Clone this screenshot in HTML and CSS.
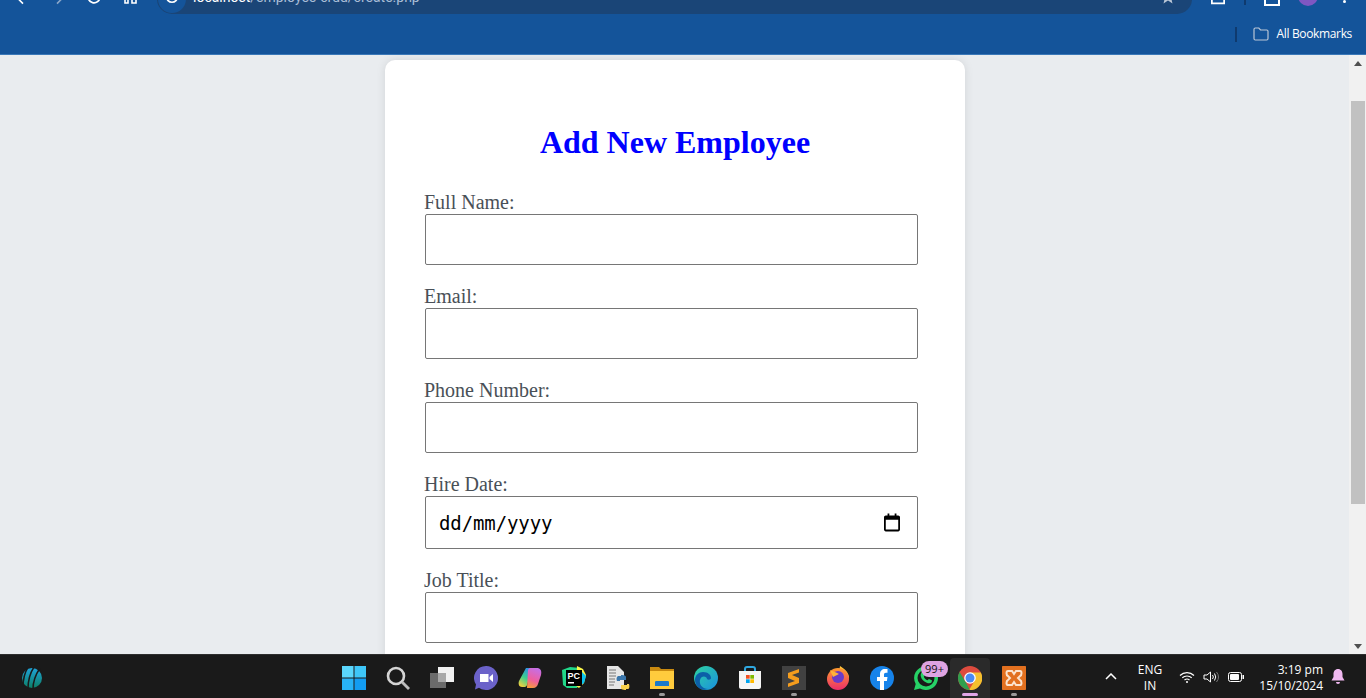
FILE: index.html
```html
<!DOCTYPE html>
<html lang="en">
<head>
<meta charset="utf-8">
<title>Add New Employee</title>
<link rel="stylesheet" href="styles.css">
</head>
<body>
<header class="chrome">
  <div class="toolbar">
    <svg class="tb tb-back" viewBox="0 0 20 20"><path d="M16 10H4M10 3l-7 7 7 7" fill="none" stroke="#fff" stroke-width="2"/></svg>
    <svg class="tb tb-fwd" viewBox="0 0 20 20"><path d="M4 10h12M10 3l7 7-7 7" fill="none" stroke="#8aa6c8" stroke-width="2"/></svg>
    <svg class="tb tb-reload" viewBox="0 0 20 20"><path d="M16.500 10a6.500 6.500 0 1 1-2-4.700" fill="none" stroke="#fff" stroke-width="2"/></svg>
    <svg class="tb tb-home" viewBox="0 0 13 4"><path d="M1 -3h3v6H1zM8 -3h4v6H8z" fill="none" stroke="#fff" stroke-width="1.600"/></svg>
    <div class="omnibox">
      <span class="lens"><svg class="lens-icon" viewBox="0 0 20 20"><circle cx="10" cy="7" r="7" fill="none" stroke="#fff" stroke-width="2"/></svg></span>
      <span class="url"><b class="host">localhost</b>/employee-crud/create.php</span>
      <svg class="star" viewBox="0 0 20 20"><path d="M10 1l2.600 6H19l-5 4.300 1.600 6.700L10 14.500 4.400 18 6 11.300 1 7h6.400z" fill="#b9c6d6"/></svg>
    </div>
    <svg class="tb tb-tabs" viewBox="0 0 16 20"><path d="M1 1h14v13H1z" fill="none" stroke="#fff" stroke-width="2"/></svg>
    <span class="tb-sep"></span>
    <svg class="tb tb-dl" viewBox="0 0 16 20"><path d="M1 1h14v14H1zM8 1v9" fill="none" stroke="#fff" stroke-width="2"/></svg>
    <span class="avatar"></span>
    <span class="dots"></span>
  </div>
  <div class="bookmarks">
    <span class="bm-sep"></span>
    <svg class="folder" viewBox="0 0 16 14"><path d="M1 2.500c0-.8.500-1.500 1.300-1.500h3.500l1.700 2h6.200c.8 0 1.300.6 1.300 1.300v7.200c0 .8-.5 1.500-1.300 1.500H2.300C1.500 13 1 12.300 1 11.500z" fill="none" stroke="#b9c6d6" stroke-width="1.200"/></svg>
    <span class="bm-text">All Bookmarks</span>
  </div>
</header>

<main class="viewport">
  <div class="page">
    <section class="card">
      <h2 class="title">Add New Employee</h2>
      <form class="form">
        <div class="field">
          <label class="label" for="name">Full Name:</label>
          <input class="input" id="name" type="text">
        </div>
        <div class="field">
          <label class="label" for="email">Email:</label>
          <input class="input" id="email" type="text">
        </div>
        <div class="field">
          <label class="label" for="phone">Phone Number:</label>
          <input class="input" id="phone" type="text">
        </div>
        <div class="field">
          <label class="label">Hire Date:</label>
          <div class="date">
            <span class="date-text">dd/mm/yyyy</span>
            <svg class="cal" viewBox="0 0 18 20"><path d="M4 0h2v2h6V0h2v2h2c1 0 2 .9 2 2v14c0 1.100-1 2-2 2H2c-1 0-2-.9-2-2V4c0-1.100 1-2 2-2h2zM2 7v11h14V7z" fill="#000"/></svg>
          </div>
        </div>
        <div class="field">
          <label class="label" for="job">Job Title:</label>
          <input class="input" id="job" type="text">
        </div>
      </form>
    </section>
  </div>
  <aside class="scrollbar">
    <span class="arrow-up"></span>
    <span class="thumb"></span>
    <span class="arrow-down"></span>
  </aside>
</main>

<footer class="taskbar">
  <div class="tb-left">
    <svg class="ic-logo" viewBox="0 0 22 22">
      <defs><linearGradient id="icc" x1="0" y1="0" x2="0" y2="1"><stop offset="0" stop-color="#1fa3d8"/><stop offset="1" stop-color="#0d7f66"/></linearGradient></defs>
      <circle cx="11" cy="11" r="10" fill="url(#icc)"/>
      <path d="M7 0C4 5 2 12 2 20M13 0C9 6 7 14 7 22M19 1C15 7 12 15 12 22" stroke="#1a1a1a" stroke-width="1.500" fill="none"/>
    </svg>
  </div>
  <div class="apps">
    <span class="app"><svg class="ic" viewBox="0 0 24 24"><path fill="#5ad6fc" d="M0 0h11.500v11.500H0z"/><path fill="#3ec6f8" d="M12.500 0H24v11.500H12.500z"/><path fill="#28b2f6" d="M0 12.500h11.500V24H0z"/><path fill="#129cf2" d="M12.500 12.500H24V24H12.500z"/></svg></span>
    <span class="app"><svg class="ic" viewBox="0 0 24 24"><circle cx="10" cy="10" r="8" fill="none" stroke="#d4d4d4" stroke-width="2.600"/><path d="M16 16l7 7" stroke="#bdbdbd" stroke-width="2.800"/></svg></span>
    <span class="app"><svg class="ic" viewBox="0 0 24 24"><path fill="#6b6b6b" d="M0 7h16v15H0z"/><path fill="#f1f1f1" d="M8 1h16v15H8z"/><path fill="#a8a8a8" d="M8 7h8v9H8z"/></svg></span>
    <span class="app"><svg class="ic" viewBox="0 0 24 24"><path fill="#6b62c9" d="M12 0a12 12 0 1 1-7 21.700L1 23.500l1-5A12 12 0 0 1 12 0z"/><path fill="#fff" d="M6 8h8.500v8H6zM15.500 11l3.500-3v8l-3.500-3z"/></svg></span>
    <span class="app"><svg class="ic" viewBox="0 0 24 24">
      <defs>
        <linearGradient id="cpl" x1="0.700" y1="0" x2="0.200" y2="1"><stop offset="0" stop-color="#2c8fe8"/><stop offset="0.500" stop-color="#3ccf8e"/><stop offset="1" stop-color="#f7d13c"/></linearGradient>
        <linearGradient id="cpr" x1="0.600" y1="0" x2="0.300" y2="1"><stop offset="0" stop-color="#c56fe6"/><stop offset="0.600" stop-color="#ef5f9e"/><stop offset="1" stop-color="#f79a3c"/></linearGradient>
      </defs>
      <path fill="url(#cpl)" d="M8 2h6l-5 17c-.5 1.500-1.500 2-3 2H4c-3 0-4-3-3-6z"/>
      <path fill="url(#cpr)" d="M10 4c.5-1.500 1.500-2 3-2h6c3 0 5 2 4 7l-3 9c-.7 2-2 4-5 4H9z"/>
    </svg></span>
    <span class="app"><svg class="ic" viewBox="0 0 24 24">
      <path fill="#21d789" d="M0 4l8-3 10 1 2 5-1 7-4 8H5L1 19z"/>
      <path fill="#fcf84a" d="M15 0l6 3 3 6-2 8-5 5-3-2z"/>
      <path fill="#07c3f2" d="M19 5l5 5-2 7-3 2z"/>
      <path fill="#000" d="M4 4h16v16H4z"/>
      <path fill="#fff" d="M6 16h6v1.500H6z"/>
      <text class="pc" x="5.500" y="12.500">PC</text>
    </svg></span>
    <span class="app"><svg class="ic" viewBox="0 0 24 24">
      <path fill="#e6e6e6" d="M1 0h11l6 6v17H1z"/>
      <path d="M3 4h7M3 7h7M3 10h7M3 13h6M3 16h6M3 19h5" stroke="#777" stroke-width="1"/>
      <path fill="#3a76ab" d="M15 9c4 0 5 1 5 2v3h-6v1h-3c-1-3 0-5 2-5h2z"/>
      <path fill="#f7d04b" d="M20 24c-4 0-5-1-5-2v-3h6v-1h2c1 3 0 5-1 5h-2z"/>
    </svg></span>
    <span class="app app-run"><svg class="ic" viewBox="0 0 24 24">
      <path fill="#c98a10" d="M0 1h9l2 2h13v6H0z"/>
      <path fill="#ffcb3d" d="M0 5h24v18H0z"/>
      <path fill="#1b79c9" d="M6 15h12c1 0 1 1 1 2v3H5v-3c0-1 0-2 1-2z"/>
    </svg></span>
    <span class="app"><svg class="ic" viewBox="0 0 24 24">
      <defs><linearGradient id="edge" x1="0" y1="0" x2="1" y2="1"><stop offset="0" stop-color="#2ed3a0"/><stop offset="1" stop-color="#1a8fe0"/></linearGradient></defs>
      <circle cx="12" cy="12" r="12" fill="url(#edge)"/>
      <path fill="#0c5fa8" d="M1 14c0-5 4-8 8-8 5 0 8 3 8 6 0 2-3 2-4 1 0-3-6-4-7 1-1 4 2 9 8 9-7 3-13-3-13-9z"/>
    </svg></span>
    <span class="app"><svg class="ic" viewBox="0 0 24 24">
      <path d="M7 7V3c0-1 1-2 2-2h6c1 0 2 1 2 2v4" fill="none" stroke="#2fa8e0" stroke-width="2"/>
      <path fill="#f5f5f5" d="M1 5h22v16c0 1-1 2-2 2H3c-1 0-2-1-2-2z"/>
      <path fill="#f25022" d="M8 9h3.700v3.700H8z"/>
      <path fill="#7fba00" d="M12.300 9H16v3.700h-3.700z"/>
      <path fill="#00a4ef" d="M8 13.300h3.700V17H8z"/>
      <path fill="#ffb900" d="M12.300 13.300H16V17h-3.700z"/>
    </svg></span>
    <span class="app app-run"><svg class="ic" viewBox="0 0 24 24">
      <path fill="#414141" d="M0 0h24v24H0z"/>
      <path fill="#f59d1d" d="M17 3L6 7v5l7 3-7 2.500V21l11-4v-5l-7-3 7-2.500z"/>
    </svg></span>
    <span class="app"><svg class="ic" viewBox="0 0 24 24">
      <defs><linearGradient id="ff" x1="0" y1="0" x2="0" y2="1"><stop offset="0" stop-color="#ff9b2e"/><stop offset="1" stop-color="#ec2d6b"/></linearGradient></defs>
      <path fill="#ffc53a" d="M14 0c5 3 9 7 9 12H12z"/>
      <circle cx="12" cy="13" r="11" fill="url(#ff)"/>
      <circle cx="12" cy="11" r="6" fill="#6a3bc9"/>
      <path fill="#ffb43a" d="M4 4c2 1 6 2 9 4l-6 3z"/>
    </svg></span>
    <span class="app"><svg class="ic" viewBox="0 0 24 24">
      <circle cx="12" cy="12" r="12" fill="#1683ea"/>
      <path fill="#fff" d="M10 24v-9H7v-4h3V8c0-3 2-5 5-5h2.500v3.700H16c-1.500 0-2 .8-2 2V11h3.500l-.6 4H14v9z"/>
    </svg></span>
    <span class="app"><svg class="ic" viewBox="0 0 24 24">
      <path fill="#26d266" d="M12 0a12 12 0 1 1-6 22.400L0 24l1.700-6A12 12 0 0 1 12 0z"/>
      <circle cx="12" cy="12" r="8.500" fill="#1a1a1a"/>
      <path fill="#26d266" d="M8 6l2 .2 1 3-1.200 1.500c.8 1.700 2 2.800 3.700 3.500l1.400-1.300 3 1.300-.2 2c-1 1.300-3 1.500-5 .6-3.300-1.400-5.400-3.800-6-6.800C6.500 8 7 7 8 6z"/>
    </svg><span class="badge">99+</span></span>
    <span class="app app-active"><svg class="ic" viewBox="0 0 24 24">
      <circle cx="12" cy="12" r="12" fill="#dd4b3e"/>
      <path fill="#f5c02e" d="M12 6.500h10.800A12 12 0 0 1 11 24l5.500-9z"/>
      <path fill="#2fa04e" d="M1.600 6l6 10 4.300 8A12 12 0 0 1 1.600 6z"/>
      <circle cx="12" cy="12" r="5.800" fill="#fff"/>
      <circle cx="12" cy="12" r="4.500" fill="#4a8af4"/>
    </svg></span>
    <span class="app app-run"><svg class="ic" viewBox="0 0 24 24">
      <path fill="#e2701f" d="M1 0h22c.6 0 1 .4 1 1v22c0 .6-.4 1-1 1H1c-.6 0-1-.4-1-1V1c0-.6.400-1 1-1z"/>
      <path d="M6 5h4l2 3 2-3h4c2 0 2 4 0 5l-2 2 2 2c2 1 2 5 0 5h-4l-2-3-2 3H6c-2 0-2-4 0-5l2-2-2-2c-2-1-2-5 0-5z" fill="none" stroke="#fbe3cd" stroke-width="2"/>
    </svg></span>
  </div>
  <div class="tray">
    <svg class="chev" viewBox="0 0 12 7"><path d="M1 6l5-5 5 5" fill="none" stroke="#fff" stroke-width="1.500"/></svg>
    <span class="lang">ENG<br>IN</span>
    <svg class="wifi" viewBox="0 0 16 12"><path d="M1 4.500a10 10 0 0 1 14 0M3.300 6.800a7 7 0 0 1 9.400 0M5.500 9a4 4 0 0 1 5 0" fill="none" stroke="#fff" stroke-width="1.200"/><circle cx="8" cy="11" r="1" fill="#fff"/></svg>
    <svg class="vol" viewBox="0 0 16 12"><path d="M1 4h3l3.500-3v10L4 8H1z" fill="none" stroke="#fff" stroke-width="1"/><path d="M9.500 4a3 3 0 0 1 0 4M11.500 2.500a6 6 0 0 1 0 7" fill="none" stroke="#fff" stroke-width="1"/><path d="M13.500 1a8 8 0 0 1 0 10" fill="none" stroke="#777" stroke-width="1"/></svg>
    <svg class="batt" viewBox="0 0 16 10"><rect x=".5" y=".5" width="13" height="9" rx="2" fill="none" stroke="#fff"/><rect x="2" y="2" width="9" height="6" rx="1" fill="#fff"/><rect x="14.500" y="3" width="1.500" height="4" fill="#fff"/></svg>
    <span class="clock">3:19 pm<br>15/10/2024</span>
    <svg class="bell" viewBox="0 0 14 15"><path d="M7 0c3 0 4.500 2.500 4.500 5v3l2 3.500H.5l2-3.500V5C2.500 2.500 4 0 7 0z" fill="#f0b8f0"/><path d="M5 13h4a2 2 0 0 1-4 0z" fill="#f0b8f0"/></svg>
  </div>
</footer>
</body>
</html>
```

FILE: styles.css
```css
* { box-sizing: border-box; }
html, body { margin: 0; height: 698px; overflow: hidden; }
body { display: flex; flex-direction: column; font-family: "Open Sans", "Liberation Sans", sans-serif; }

/* browser chrome */
.chrome { height: 55px; background: #14549a; border-bottom: 1px solid #3a78b8; flex: none; }
.toolbar { height: 14px; overflow: hidden; display: flex; align-items: flex-end; padding-left: 15px; }
.tb { flex: none; display: block; }
.tb-back { width: 16px; height: 16px; margin-bottom: 8px; }
.tb-fwd { width: 16px; height: 16px; margin-left: 18px; margin-bottom: 8px; }
.tb-reload { width: 18px; height: 18px; margin-left: 20px; margin-bottom: 8px; }
.tb-home { width: 13px; height: 4px; margin-left: 21px; margin-bottom: 10px; }
.omnibox { width: 1035px; height: 30px; margin-left: 20px; flex: none; background: #1a4577; border-radius: 0 0 15px 15px; display: flex; align-items: flex-end; }
.lens { width: 28px; height: 28px; border-radius: 50%; background: #14549a; margin-left: 1px; margin-bottom: 1px; display: flex; align-items: flex-end; justify-content: center; flex: none; }
.lens-icon { width: 16px; height: 16px; margin-bottom: 6px; }
.url { margin-left: 7px; font: 14px/20px Roboto, "Liberation Sans", sans-serif; color: #a9bdd6; margin-bottom: 7px; white-space: nowrap; }
.host { color: #fff; font-weight: 400; }
.star { width: 16px; height: 16px; margin-left: auto; margin-right: 16px; margin-bottom: 9px; flex: none; }
.tb-tabs { width: 14px; height: 17.500px; margin-left: 19px; align-self: flex-start; margin-top: -9px; }
.tb-sep { width: 2px; height: 10px; background: #0f3a6e; margin-left: 19px; margin-bottom: 9px; flex: none; }
.tb-dl { width: 16px; height: 20px; margin-left: 18px; align-self: flex-start; margin-top: -10px; }
.avatar { width: 20px; height: 20px; border-radius: 50%; background: #7f57c2; margin-left: 18px; margin-bottom: 8px; flex: none; }
.dots { width: 3px; height: 3px; border-radius: 50%; background: #fff; margin-left: 25px; margin-bottom: 11px; flex: none; box-shadow: 0 -6px 0 #fff; }
.bookmarks { height: 40px; display: flex; align-items: center; justify-content: flex-end; padding-right: 14px; }
.bm-sep { width: 2px; height: 15px; background: #0f3a6e; margin-right: 16px; }
.folder { width: 16px; height: 14px; margin-right: 8px; }
.bm-text { color: #fff; font-size: 12px; letter-spacing: -0.35px; line-height: 16px; }

/* page */
.viewport { flex: 1; min-height: 0; display: flex; overflow: hidden; background: #e9ecef; }
.page { flex: 1; min-width: 0; display: flex; justify-content: center; align-items: flex-start; padding: 5px 0 0 1px; overflow: hidden; }
.card { width: 580px; height: 800px; flex: none; background: #fff; border-radius: 10px; padding: 40px; box-shadow: 0 0 10px rgba(0, 0, 0, 0.1); }
.title { margin: 24px 0 30px; font: bold 32px/37px "Liberation Serif", serif; color: #00f; text-align: center; }
.form { display: flex; flex-direction: column; gap: 20px; }
.field { display: flex; flex-direction: column; align-items: flex-start; }
.label { font: 20px/23px "Liberation Serif", serif; color: #495057; margin-left: -1px; }
.input { display: block; width: 493px; height: 51px; border: 1px solid #767676; border-radius: 2px; background: #fff; padding: 0; }
.date { width: 493px; height: 53px; border: 1px solid #767676; border-radius: 2px; background: #fff; display: flex; align-items: center; justify-content: space-between; padding: 0 17px 0 13px; }
.date-text { font: 19px/24px "DejaVu Sans Mono", monospace; color: #000; letter-spacing: -0.1px; }
.cal { width: 16px; height: 19px; display: block; }

/* scrollbar */
.scrollbar { width: 17px; flex: none; background: #f1f1f1; display: flex; flex-direction: column; align-items: center; }
.arrow-up { width: 0; height: 0; border: 4px solid transparent; border-top: 0; border-bottom: 5px solid #505050; margin-top: 6px; }
.thumb { width: 14px; height: 403px; background: #c1c1c1; margin-top: 35px; }
.arrow-down { width: 0; height: 0; border: 4px solid transparent; border-bottom: 0; border-top: 5px solid #505050; margin-top: auto; margin-bottom: 5px; }

/* taskbar */
.taskbar { height: 44px; flex: none; background: #1a1a1a; border-top: 1px solid #2e2e2e; display: flex; align-items: stretch; }
.tb-left { width: 332px; flex: none; padding: 3px 0 0 21px; display: flex; align-items: center; }
.ic-logo { width: 22px; height: 22px; }
.apps { display: flex; flex: none; }
.app { width: 44px; height: 43px; padding-top: 3px; display: flex; align-items: center; justify-content: center; position: relative; }
.ic { width: 24px; height: 24px; display: block; }
.pc { font: bold 9px "Liberation Sans", sans-serif; fill: #fff; }
.app-run::after, .app-active::after { content: ""; position: absolute; bottom: 2px; left: 50%; transform: translateX(-50%); width: 6px; height: 3px; border-radius: 2px; background: #9a9a9a; }
.app-active { width: 40px; height: 40px; padding-top: 0; margin: 3px 2px 0; background: #2a2a2a; border-radius: 4px 4px 0 0; }
.app-active::after { width: 16px; background: #e0a4e6; }
.badge { position: absolute; top: 6px; left: 17px; width: 27px; height: 16px; border-radius: 8px; background: #dea3e2; color: #111; font-size: 11px; line-height: 16px; text-align: center; }
.tray { flex: 1; display: flex; align-items: center; color: #fff; font-size: 12px; line-height: 16px; }
.chev { width: 12px; height: 7px; margin-left: 69px; flex: none; }
.lang { width: 40px; margin-left: 13px; padding-top: 3px; text-align: center; flex: none; }
.wifi { width: 16px; height: 12px; margin-left: 9px; flex: none; }
.vol { width: 16px; height: 12px; margin-left: 8px; flex: none; }
.batt { width: 16px; height: 10px; margin-left: 9px; flex: none; }
.clock { width: 75px; margin-left: 4px; padding-top: 2px; text-align: right; flex: none; }
.bell { width: 14px; height: 15px; margin-left: 8px; flex: none; }
```
